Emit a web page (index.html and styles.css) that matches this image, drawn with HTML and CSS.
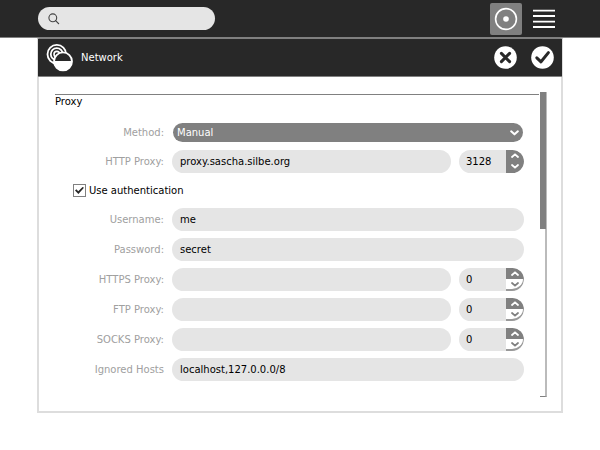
FILE: index.html
```html
<!DOCTYPE html>
<html lang="en">
<head>
<meta charset="utf-8">
<title>Network</title>
<link rel="stylesheet" href="styles.css">
</head>
<body>
<svg class="defs" width="0" height="0" aria-hidden="true">
  <symbol id="up" viewBox="0 0 8 5"><path d="M1 4l3-2.7 3 2.7" fill="none" stroke="currentColor" stroke-width="1.8" stroke-linecap="round" stroke-linejoin="round"/></symbol>
  <symbol id="down" viewBox="0 0 8 5"><path d="M1 1l3 2.7 3-2.7" fill="none" stroke="currentColor" stroke-width="1.8" stroke-linecap="round" stroke-linejoin="round"/></symbol>
</svg>
<header class="toolbar">
  <div class="search">
    <svg width="12" height="12" viewBox="0 0 12 12" aria-hidden="true"><circle cx="4.8" cy="4.8" r="3.9" fill="none" stroke="#444" stroke-width="1.1"/><path d="M7.6 7.6L10.6 10.6" stroke="#444" stroke-width="1.3" stroke-linecap="round"/></svg>
    <input type="text" aria-label="Search">
  </div>
  <div class="views">
    <button class="view active" aria-label="Favorites view"><svg width="24" height="24" viewBox="0 0 24 24"><circle cx="12" cy="12" r="10.4" fill="none" stroke="#fff" stroke-width="1.6"/><circle cx="12" cy="12" r="2.8" fill="#fff"/></svg></button>
    <button class="view list" aria-label="List view"><svg width="22" height="20" viewBox="0 0 22 20"><path d="M0 1.6h22M0 7h22M0 12.6h22M0 18h22" stroke="#fff" stroke-width="1.8"/></svg></button>
  </div>
</header>
<main class="panel">
  <div class="titlebar">
    <svg class="logo" width="28" height="28" viewBox="0 0 28 28" aria-hidden="true">
      <circle cx="10.8" cy="10.2" r="9.3" fill="#282828" stroke="#fff" stroke-width="1.8"/>
      <circle cx="10.8" cy="10.2" r="6" fill="none" stroke="#fff" stroke-width="1.8"/>
      <circle cx="10.8" cy="10.2" r="2.8" fill="none" stroke="#fff" stroke-width="1.6"/>
      <circle cx="17" cy="17.4" r="9" fill="#282828" stroke="#fff" stroke-width="1.8"/>
      <path d="M8 17h18v.4a9 9 0 0 1-18 0z" fill="#fff"/>
    </svg>
    <h1>Network</h1>
    <button class="round" aria-label="Cancel"><svg width="23" height="23" viewBox="0 0 23 23"><circle cx="11.5" cy="11.5" r="11.3" fill="#fff"/><path d="M7.4 7.4l8.2 8.2M15.6 7.4l-8.2 8.2" stroke="#282828" stroke-width="3" stroke-linecap="round"/></svg></button>
    <button class="round" aria-label="Done"><svg width="23" height="23" viewBox="0 0 23 23"><circle cx="11.5" cy="11.5" r="11.3" fill="#fff"/><path d="M5.8 11.8l4.2 4 7.4-9.2" fill="none" stroke="#282828" stroke-width="3" stroke-linecap="round" stroke-linejoin="round"/></svg></button>
  </div>
  <div class="body">
    <form class="section">
      <h2>Proxy</h2>
      <div class="row method">
        <label for="method">Method:</label>
        <div class="select"><select id="method"><option>Manual</option></select><svg width="9" height="6"><use href="#down"/></svg></div>
      </div>
      <div class="row">
        <label for="http">HTTP Proxy:</label>
        <input class="entry" id="http" type="text" value="proxy.sascha.silbe.org">
        <div class="spin"><input type="text" inputmode="numeric" aria-label="HTTP port" value="3128"><div class="steps"><button type="button" aria-label="Increase"><svg width="8" height="5"><use href="#up"/></svg></button><button type="button" aria-label="Decrease"><svg width="8" height="5"><use href="#down"/></svg></button></div></div>
      </div>
      <div class="check">
        <input id="auth" type="checkbox" checked><label for="auth">Use authentication</label>
      </div>
      <div class="row">
        <label for="user">Username:</label>
        <input class="entry" id="user" type="text" value="me">
      </div>
      <div class="row">
        <label for="pass">Password:</label>
        <input class="entry" id="pass" type="text" value="secret">
      </div>
      <div class="row">
        <label for="https">HTTPS Proxy:</label>
        <input class="entry" id="https" type="text">
        <div class="spin zero"><input type="text" inputmode="numeric" aria-label="HTTPS port" value="0"><div class="steps"><button type="button" aria-label="Increase"><svg width="8" height="5"><use href="#up"/></svg></button><button type="button" aria-label="Decrease"><svg width="8" height="5"><use href="#down"/></svg></button></div></div>
      </div>
      <div class="row">
        <label for="ftp">FTP Proxy:</label>
        <input class="entry" id="ftp" type="text">
        <div class="spin zero"><input type="text" inputmode="numeric" aria-label="FTP port" value="0"><div class="steps"><button type="button" aria-label="Increase"><svg width="8" height="5"><use href="#up"/></svg></button><button type="button" aria-label="Decrease"><svg width="8" height="5"><use href="#down"/></svg></button></div></div>
      </div>
      <div class="row">
        <label for="socks">SOCKS Proxy:</label>
        <input class="entry" id="socks" type="text">
        <div class="spin zero"><input type="text" inputmode="numeric" aria-label="SOCKS port" value="0"><div class="steps"><button type="button" aria-label="Increase"><svg width="8" height="5"><use href="#up"/></svg></button><button type="button" aria-label="Decrease"><svg width="8" height="5"><use href="#down"/></svg></button></div></div>
      </div>
      <div class="row">
        <label for="ignored">Ignored Hosts</label>
        <input class="entry" id="ignored" type="text" value="localhost,127.0.0.0/8">
      </div>
    </form>
    <div class="scrollbar"><div class="thumb"></div><div class="trough"></div></div>
  </div>
</main>
</body>
</html>
```
FILE: styles.css
```css
* {
  box-sizing: border-box;
}

body {
  margin: 0;
  background: #fff;
  color: #000;
  font: 10px/14px "DejaVu Sans", sans-serif;
}

input,
select,
button {
  margin: 0;
  padding: 0;
  border: 0;
  background: none;
  color: inherit;
  font: inherit;
}

svg {
  display: block;
}

.defs {
  position: absolute;
}

.toolbar {
  display: flex;
  align-items: center;
  justify-content: space-between;
  height: 38px;
  padding: 0 40px 0 38px;
  background: #282828;
  border-bottom: 1px solid #808080;
}

.search {
  display: flex;
  align-items: center;
  gap: 6px;
  width: 177px;
  height: 23px;
  padding: 0 10px;
  border-radius: 12px;
  background: #e5e5e5;
}

.search input {
  flex: 1;
  min-width: 0;
}

.views {
  display: flex;
  gap: 6px;
}

.view {
  display: grid;
  place-items: center;
  width: 32px;
  height: 32px;
  border-radius: 2px;
}

.view.active {
  background: #808080;
}

.panel {
  margin: 0 37px;
  border: 2px solid #ddd;
  border-top: 1px solid #808080;
}

.titlebar {
  display: flex;
  align-items: center;
  gap: 14px;
  height: 38px;
  margin: 0 -1px;
  padding: 0 8px;
  background: #282828;
  border-bottom: 1px solid #808080;
  color: #fff;
}

.titlebar h1 {
  flex: 1;
  margin: 0 0 0 -7px;
  font-size: 10px;
  font-weight: normal;
}

.body {
  display: flex;
  padding: 15px 14px 14px 16px;
}

.section {
  display: flex;
  flex: 1;
  flex-direction: column;
  gap: 7px;
  min-width: 0;
  padding: 2px 0 16px;
}

.section h2 {
  margin: 0 1px 7px 0;
  border-top: 1px solid #808080;
  font-size: 10px;
  font-weight: normal;
}

.row {
  display: flex;
  align-items: center;
  gap: 8px;
  height: 23px;
  padding-right: 16px;
}

.row label {
  flex: none;
  width: 109px;
  color: #a0a0a0;
  text-align: right;
}

.method {
  align-items: flex-start;
  height: 20px;
}

.method label,
.method select {
  line-height: 19px;
}

.entry {
  flex: 1;
  min-width: 0;
  height: 23px;
  padding: 0 8px;
  border-radius: 12px;
  background: #e5e5e5;
}

.select {
  display: flex;
  flex: 1;
  align-items: center;
  height: 19px;
  margin: 0 1px;
  padding: 0 4px;
  border-radius: 10px;
  background: #808080;
  color: #fff;
}

.select select {
  flex: 1;
  height: 19px;
  appearance: none;
}

.spin {
  display: flex;
  width: 65px;
  height: 23px;
  border-radius: 12px;
  overflow: hidden;
  background: #e5e5e5;
}

.spin input {
  flex: 1;
  min-width: 0;
  padding-left: 7px;
}

.steps {
  display: grid;
  grid-template-rows: 11px 12px;
  width: 18px;
  border-radius: 0 12px 12px 0;
  overflow: hidden;
}

.steps button {
  display: grid;
  place-items: center;
  background: #808080;
  color: #fff;
}

.steps button:last-child {
  padding-bottom: 2px;
}

.zero .steps button:last-child {
  padding-bottom: 0;
  border: solid #999;
  border-width: 0 1px 2px 0;
  border-radius: 0 0 12px 0;
  background: #fff;
  color: #808080;
}

.check {
  display: flex;
  align-items: center;
  gap: 3px;
  height: 21px;
  padding-left: 18px;
}

.check input {
  display: grid;
  place-items: center;
  width: 13px;
  height: 13px;
  border: 1px solid #808080;
  appearance: none;
}

.check input:checked::before {
  content: "";
  width: 9px;
  height: 7px;
  background: #282828;
  clip-path: polygon(0 50%, 15% 32%, 36% 62%, 84% 0, 100% 12%, 38% 100%);
}

.scrollbar {
  display: flex;
  flex-direction: column;
  width: 7px;
}

.thumb {
  flex: none;
  width: 7px;
  height: 45%;
  background: #808080;
  border-right: 1px solid #bbb;
}

.trough {
  flex: 1;
  border: solid #bbb;
  border-width: 0 2px 1px 0;
  border-bottom-color: #808080;
}
```
